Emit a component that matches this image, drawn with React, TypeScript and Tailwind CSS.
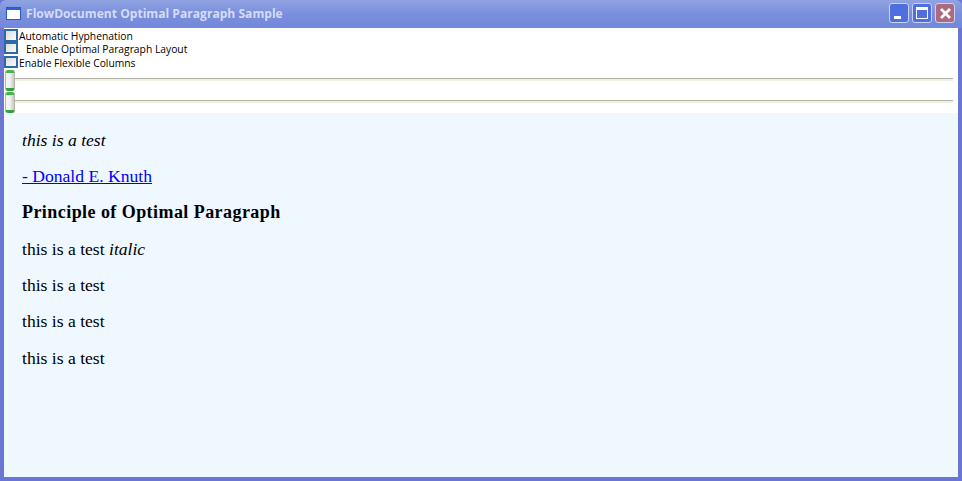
import { ReactNode } from "react";

function Check({ label, indent, row }: { label: string; indent?: boolean; row: string }) {
  return (
    <div className={`flex items-start ${row}`}>
      <div className="w-[14px] h-full shrink-0 border-2 border-[#2b6aa6] bg-gradient-to-br from-[#dcdcd7] to-[#fbfbf9]" />
      <span className={`text-[10.3px] leading-[14px] text-black whitespace-nowrap font-['Open_Sans',sans-serif] ${indent ? "ml-[8px]" : "ml-[1px]"}`}>
        {label}
      </span>
    </div>
  );
}

function Slider() {
  return (
    <div className="flex h-[22px] items-stretch pr-[5px]">
      <div className="w-[10px] ml-[1px] mb-[1px] shrink-0 flex flex-col rounded-[2px] border-x border-[#b5b5aa] bg-gradient-to-r from-[#f4f4f0] via-[#f2f2ee] to-[#c8c8c0]">
        <div className="h-[3px] bg-[#3fb84a] rounded-t-[2px]" />
        <div className="flex-1" />
        <div className="h-[3px] bg-[#2aa536] rounded-b-[2px]" />
      </div>
      <div className="flex-1 pt-[8px]">
        <div className="h-[1px] bg-[#b4b4a8]" />
        <div className="h-[2px] bg-[#f1efe2]" />
      </div>
    </div>
  );
}

function Para({ children, bold }: { children: ReactNode; bold?: boolean }) {
  return (
    <p className={`h-[36.3px] leading-[20px] text-black whitespace-nowrap ${bold ? "text-[18px] tracking-[0.44px] font-bold" : "text-[17.6px]"}`}>
      {children}
    </p>
  );
}

function WinButton({ className, children }: { className: string; children: ReactNode }) {
  return (
    <div className={`w-[20px] h-[20px] rounded-[3px] border border-[#c9d3f3] flex ${className}`}>
      {children}
    </div>
  );
}

export default function App() {
  return (
    <div className="w-[962px] h-[481px] flex flex-col overflow-hidden bg-[#6a77d2] px-[4px] pb-[4px]">
      <div className="-mx-[4px] h-[28px] shrink-0 flex items-center pl-[6px] pr-[7px] rounded-t-[6px] bg-gradient-to-b from-[#8fa3e3] via-[#7a8fdc] to-[#7288da]">
        <svg width="15" height="13" viewBox="0 0 15 13" className="shrink-0 mb-[2px]">
          <rect x="0.5" y="0.5" width="14" height="12" fill="#fff" stroke="#2a5bc4" />
          <rect x="1" y="1" width="13" height="2" fill="#2a62d8" />
        </svg>
        <span className="ml-[5px] text-[12.1px] font-bold text-[#d3dcf6] whitespace-nowrap font-['Open_Sans',sans-serif]">
          FlowDocument Optimal Paragraph Sample
        </span>
        <div className="ml-auto flex gap-[3px] pb-[2px]">
          <WinButton className="bg-[#4f6ee0] items-end pl-[4px] pb-[3px]">
            <div className="w-[7px] h-[3px] bg-white" />
          </WinButton>
          <WinButton className="bg-[#4f6ee0] items-center justify-center">
            <div className="w-[12px] h-[12px] border border-white border-t-[3px]" />
          </WinButton>
          <WinButton className="bg-[#ad6a7e] items-center justify-center">
            <svg width="13" height="13" viewBox="0 0 13 13">
              <path d="M2 2 L11 11 M11 2 L2 11" stroke="#fff" strokeWidth="2.8" />
            </svg>
          </WinButton>
        </div>
      </div>
      <div className="flex-1 flex flex-col bg-white">
        <div className="h-[85px] shrink-0 pt-[1px]">
          <Check row="h-[13px]" label="Automatic Hyphenation" />
          <Check row="h-[12px] mb-[2px]" label="Enable Optimal Paragraph Layout" indent />
          <Check row="h-[12px] mb-[2px]" label="Enable Flexible Columns" />
          <Slider />
          <Slider />
        </div>
        <div className="flex-1 bg-[#eff7ff] pl-[18px] pt-[16.8px] font-['Liberation_Serif',serif]">
          <Para><em>this is a test</em></Para>
          <Para><a className="text-[#0000ff] underline">- Donald E. Knuth</a></Para>
          <Para bold>Principle of Optimal Paragraph</Para>
          <Para>this is a test <em>italic</em></Para>
          <Para>this is a test</Para>
          <Para>this is a test</Para>
          <Para>this is a test</Para>
        </div>
      </div>
    </div>
  );
}
